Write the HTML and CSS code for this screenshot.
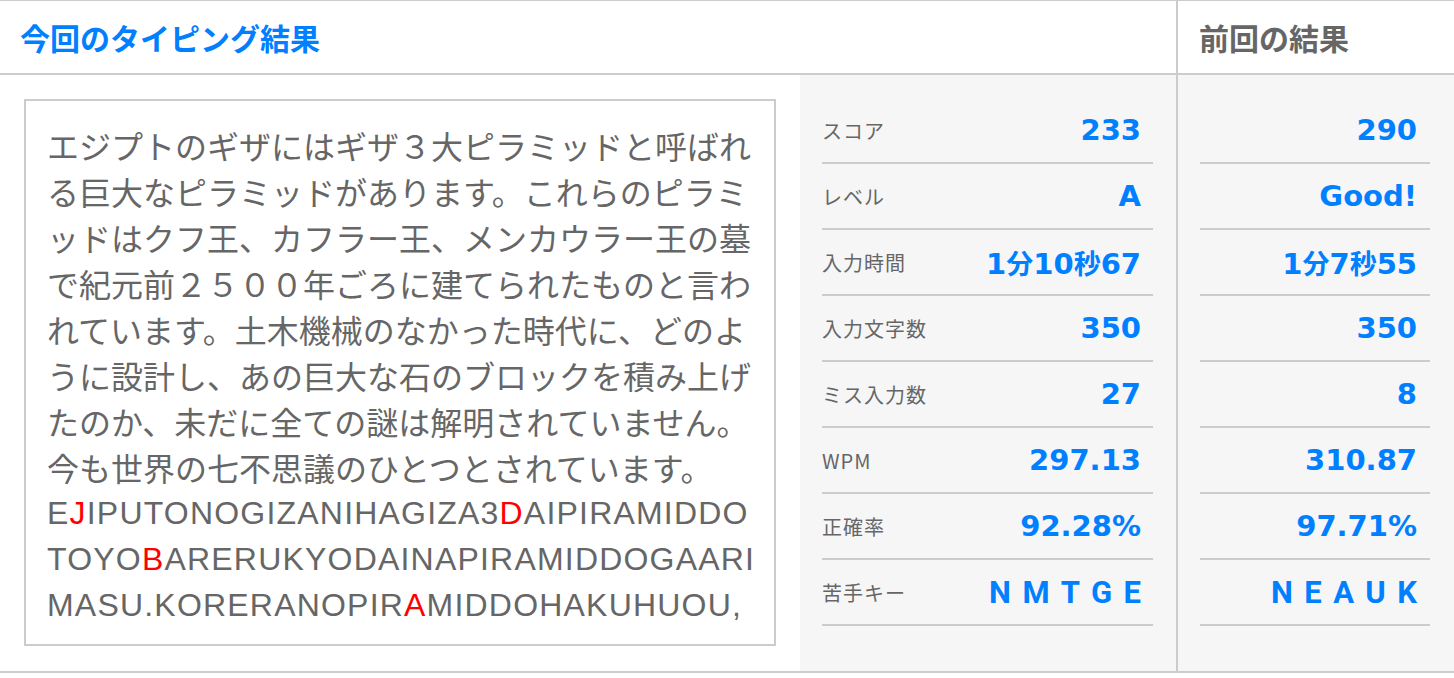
FILE: index.html
```html
<!DOCTYPE html>
<html lang="ja">
<head>
  <meta charset="UTF-8">
  <meta name="viewport" content="width=device-width, initial-scale=1.0">
  <title>タイピング結果</title>
  <link rel="stylesheet" href="styles.css">
</head>
<body>
  <div id="result">
    <div class="result-head">
      <h2 class="head-now">今回のタイピング結果</h2>
      <h2 class="head-prev">前回の結果</h2>
    </div>
    <div class="result-body">
      <div class="text-area">
        <div class="text-box">
          <p class="kana">エジプトのギザにはギザ３大ピラミッドと呼ばれ<br>る巨大なピラミッドがあります。これらのピラミ<br>ッドはクフ王、カフラー王、メンカウラー王の墓<br>で紀元前２５００年ごろに建てられたものと言わ<br>れています。土木機械のなかった時代に、どのよ<br>うに設計し、あの巨大な石のブロックを積み上げ<br>たのか、未だに全ての謎は解明されていません。<br>今も世界の七不思議のひとつとされています。</p>
          <p class="roman">E<span class="miss">J</span>IPUTONOGIZANIHAGIZA3<span class="miss">D</span>AIPIRAMIDDO<br>TOYO<span class="miss">B</span>ARERUKYODAINAPIRAMIDDOGAARI<br>MASU.KORERANOPIR<span class="miss">A</span>MIDDOHAKUHUOU,</p>
        </div>
      </div>

      <!-- 今回 -->
      <div class="stats now">
        <div class="row"><span class="label">スコア</span><span class="value">233</span></div>
        <div class="row"><span class="label">レベル</span><span class="value">A</span></div>
        <div class="row"><span class="label">入力時間</span><span class="value">1<span class="unit">分</span>10<span class="unit">秒</span>67</span></div>
        <div class="row"><span class="label">入力文字数</span><span class="value">350</span></div>
        <div class="row"><span class="label">ミス入力数</span><span class="value">27</span></div>
        <div class="row"><span class="label">WPM</span><span class="value">297.13</span></div>
        <div class="row"><span class="label">正確率</span><span class="value">92.28%</span></div>
        <div class="row"><span class="label">苦手キー</span><span class="value keys">NMTGE</span></div>
      </div>

      <!-- 前回 -->
      <div class="stats prev">
        <div class="row"><span class="value">290</span></div>
        <div class="row"><span class="value">Good!</span></div>
        <div class="row"><span class="value">1<span class="unit">分</span>7<span class="unit">秒</span>55</span></div>
        <div class="row"><span class="value">350</span></div>
        <div class="row"><span class="value">8</span></div>
        <div class="row"><span class="value">310.87</span></div>
        <div class="row"><span class="value">97.71%</span></div>
        <div class="row"><span class="value keys">NEAUK</span></div>
      </div>
    </div>
  </div>
</body>
</html>
```

FILE: styles.css
```css
body {
  margin: 0;
  padding: 0;
  font-family: "Noto Sans CJK JP", "Noto Sans", sans-serif;
  color: #666;
  background-color: #fff;
}

#result {
  width: 1454px;
  border-top: 1px solid #ccc;
  border-bottom: 2px solid #ccc;
}

.result-head {
  display: flex;
  height: 72px;
  border-bottom: 2px solid #ccc;
}

.result-head h2 {
  margin: 0;
  display: flex;
  align-items: center;
  font-size: 30px;
  font-weight: bold;
}

.head-now {
  width: 1178px;
  box-sizing: border-box;
  padding-left: 20px;
  border-right: 2px solid #ccc;
  color: #0080ff;
}

.head-prev {
  flex: 1;
  padding-left: 21px;
  color: #666;
}

.result-body {
  display: flex;
  height: 596px;
}

.text-area {
  width: 800px;
  box-sizing: border-box;
  padding: 24px 24px 25px;
}

.text-box {
  height: 100%;
  box-sizing: border-box;
  border: 2px solid #ccc;
  padding: 21px 0 0 21px;
  overflow: hidden;
  font-size: 32px;
  line-height: 46px;
  white-space: nowrap;
}

.text-box p {
  margin: 0;
}

.roman {
  font-family: "Liberation Sans", Arial, sans-serif;
  letter-spacing: 1.2px;
}

.miss {
  color: #ff0000;
}

.stats {
  background-color: #f6f6f6;
  box-sizing: border-box;
  padding-top: 23px;
}

.stats.now {
  width: 378px;
  padding-left: 22px;
  padding-right: 23px;
  border-right: 2px solid #ccc;
}

.stats.prev {
  flex: 1;
  padding-left: 22px;
  padding-right: 24px;
}

.row {
  display: flex;
  align-items: center;
  justify-content: space-between;
  height: 64px;
  padding-right: 12px;
  border-bottom: 2px solid #ccc;
}

.stats.prev .row {
  justify-content: flex-end;
  padding-right: 13px;
}

.label {
  font-size: 20px;
  letter-spacing: 1px;
  color: #666;
}

.value {
  font-family: "DejaVu Sans", "Noto Sans CJK JP", sans-serif;
  font-size: 29px;
  font-weight: bold;
  color: #0080ff;
  white-space: nowrap;
}

.value .unit {
  font-family: "Noto Sans CJK JP", sans-serif;
  font-size: 27px;
}

.value.keys {
  font-family: Roboto, "Liberation Sans", sans-serif;
  font-size: 31px;
  letter-spacing: 11.5px;
  margin-right: -11.5px;
}
```
